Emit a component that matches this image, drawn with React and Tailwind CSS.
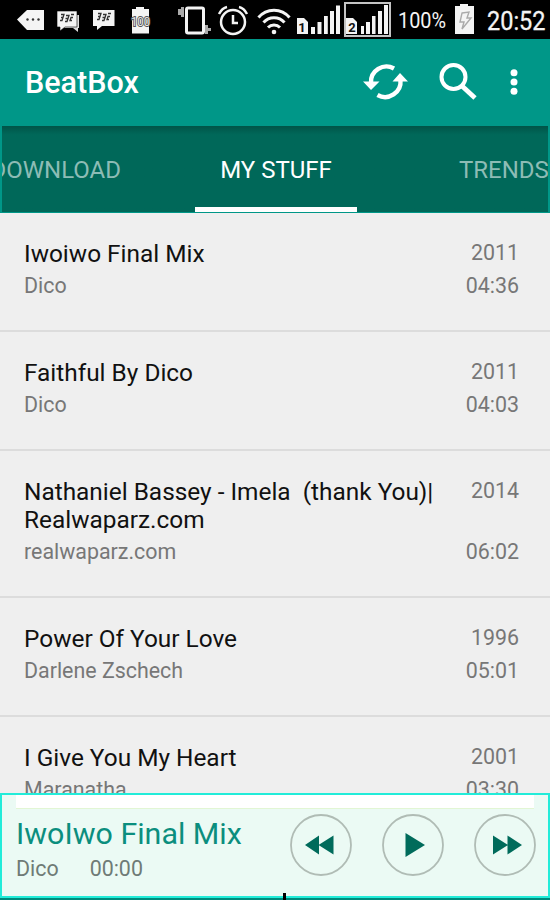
const tracks = [
  { title: "Iwoiwo Final Mix", artist: "Dico", year: "2011", time: "04:36" },
  { title: "Faithful By Dico", artist: "Dico", year: "2011", time: "04:03" },
  { title: "Nathaniel Bassey - Imela  (thank You)|\nRealwaparz.com", artist: "realwaparz.com", year: "2014", time: "06:02" },
  { title: "Power Of Your Love", artist: "Darlene Zschech", year: "1996", time: "05:01" },
  { title: "I Give You My Heart", artist: "Maranatha", year: "2001", time: "03:30" },
];

function StatusBar() {
  return (
    <header className="h-[39px] shrink-0 bg-black">
      <svg width="550" height="39" viewBox="0 0 550 39" fill="#f4f4f4">
        <path d="M17 19.500 27 10h17v20H27z" />
        <g fill="#333">
          <circle cx="27.500" cy="19.500" r="1.200" />
          <circle cx="33" cy="19.500" r="1.200" />
          <circle cx="38.500" cy="19.500" r="1.200" />
        </g>
        <path d="M62 15h17v13h-1v4l-5-4H62z" fill="#ddd" />
        <path d="M57 11h20v16H65l-5 4v-4h-3z" stroke="#000" strokeWidth=".6" />
        <path d="M93 10h21.500v16H102l-5 4v-4h-4z" />
        <g fill="none" stroke="#333" strokeWidth="1.300">
          <path d="M61 14.500h3l-1 3h-2M66 15.500h3l-1 3h-2.500M71 14.500h3M63 17.500l-1 3h-2M68 18.500l-1 3h-2M73 17.500h-2l-1 3h2" />
          <path d="M98 13.500h3l-1 3h-2M103 14.500h3l-1 3h-2.500M108 13.500h3M100 16.500l-1 3h-2M105 17.500l-1 3h-2M110 16.500h-2l-1 3h2" />
        </g>
        <path d="M136 7h8v2h5v24.500h-17V9h4z" />
        <text x="140.500" y="26" textAnchor="middle" fontFamily="Roboto, sans-serif" fontSize="13" textLength="19" lengthAdjust="spacingAndGlyphs" fill="#e8e8e8" stroke="#555" strokeWidth="2" paintOrder="stroke">100</text>
        <rect x="186.500" y="8" width="17" height="25" rx="1.500" fill="#000" stroke="#f4f4f4" strokeWidth="3" />
        <path d="M178 9h3V7h3v10h-3v-2h-3zM205 25h3v3h3v3h-3v3h-3z" fill="#aaa" />
        <g fill="none" stroke="#f4f4f4" strokeWidth="2.500">
          <circle cx="233" cy="22" r="12" />
          <path d="M233 15v8h5M219 14q3-6 8-7M239 7q5 1 8 7" />
        </g>
        <g fill="none" stroke="#f4f4f4" strokeWidth="3">
          <path d="M258.500 17.500a20 20 0 0 1 31 0M263.500 22.500a14 14 0 0 1 21 0M268 27.500a8.500 8.500 0 0 1 12 0" />
        </g>
        <circle cx="274" cy="32" r="2.300" />
        <path d="M297 18h7l4 4v12h-11zM311 27h4v7h-4zM317.500 22h4v12h-4zM324 16h3.800v18H324zM330 11h4v23h-4zM336 5.500h4V34h-4z" />
        <rect x="345" y="3" width="45" height="33" fill="none" stroke="#c4c4c4" strokeWidth="2" />
        <path d="M346 18h7l4 4v12h-11zM361 26h3v8h-3zM366 22h4v12h-4zM372 16h3.500v18H372zM378 11h4v23h-4zM384 5h4v29h-4z" />
        <g fill="#111" fontFamily="Roboto, sans-serif" fontSize="13" fontWeight="700" textAnchor="middle">
          <text x="302" y="32">1</text>
          <text x="352" y="32">2</text>
        </g>
        <text x="398" y="28.300" fontFamily="Roboto, sans-serif" fontSize="22" textLength="48" lengthAdjust="spacingAndGlyphs">100%</text>
        <path d="M460 4h8v2h6v28h-19V6h5z" />
        <path d="m462 13 7-1-2 6h4l-9 11 2-7h-4z" fill="none" stroke="#aaa" strokeWidth="1.400" />
        <text x="487" y="29.500" fontFamily="Roboto, sans-serif" fontSize="25.500" textLength="58.500" lengthAdjust="spacingAndGlyphs" stroke="#f4f4f4" strokeWidth=".3">20:52</text>
      </svg>
    </header>
  );
}

function Toolbar() {
  return (
    <div className="flex h-[87px] shrink-0 items-center justify-between bg-[#009788] pl-[25px] text-white">
      <h1 className="text-[30.500px] leading-9 font-medium">BeatBox</h1>
      <svg width="190" height="87" viewBox="360 39 190 87" fill="none" stroke="white">
        <g strokeWidth="4.400">
          <path d="M371 83a15.500 15.500 0 0 1 23-14.500M400.500 80a15.500 15.500 0 0 1-23 15" />
          <circle cx="453.500" cy="77" r="12" strokeWidth="4" />
          <path d="m462 86 13 12" strokeWidth="4.800" />
        </g>
        <g fill="white" stroke="none">
          <path d="M363 81.500h16.500L371 90zM392.500 81.500H408L400 73z" />
          <circle cx="514" cy="72.700" r="3.500" />
          <circle cx="514" cy="82" r="3.500" />
          <circle cx="514" cy="91.200" r="3.500" />
        </g>
      </svg>
    </div>
  );
}

function Tabs() {
  return (
    <nav className="flex h-[87px] shrink-0 overflow-hidden border-x-2 border-b border-[#009788] bg-[#006859] bg-linear-to-b from-[#005448] to-[#006859] to-10% text-[24px] leading-7 whitespace-nowrap text-[#8dbcb5]">
      <div className="flex w-[193px] shrink-0 items-center justify-end pt-[2px] pr-[74px]">DOWNLOAD</div>
      <div className="flex w-[162px] shrink-0 items-center justify-center border-b-[5px] border-white pt-[7px] text-white">MY STUFF</div>
      <div className="flex shrink-0 items-center pt-[2px] pl-[102px]">TRENDS</div>
    </nav>
  );
}

function Track({ track }) {
  return (
    <li className="flex shrink-0 justify-between border-b-2 border-[#dcdcdc] pt-[27px] pr-[31px] pb-[32px] pl-6">
      <div>
        <div className="text-[24.400px] leading-7 whitespace-pre text-[#111]">{track.title}</div>
        <div className="mt-[5px] text-[21.400px] leading-[25px] text-[#777]">{track.artist}</div>
      </div>
      <div className="flex flex-col items-end justify-between text-[21.400px] leading-[25px] text-[#777]">
        <span>{track.year}</span>
        <span>{track.time}</span>
      </div>
    </li>
  );
}

function RoundButton({ label, path }) {
  return (
    <button aria-label={label} className="size-[62px] shrink-0">
      <svg width="62" height="62" viewBox="0 0 62 62">
        <circle cx="31" cy="31" r="30" fill="none" stroke="#b0bcb5" strokeWidth="1.800" />
        <path d={path} fill="#006b5b" />
      </svg>
    </button>
  );
}

function Player() {
  return (
    <footer className="relative h-[107px] shrink-0 border-b-2 border-[#00897b] bg-[#ebfaf4]">
      <div className="flex h-[105px] flex-col border-[2.500px] border-[#22ecd9] pr-[14px] pl-[14px]">
        <div className="h-[14px] shrink-0 border-b border-[#e2f6d4] bg-white" />
        <div className="flex justify-between">
          <div className="pt-[7px]">
            <div className="text-[30.400px] leading-[35px] whitespace-nowrap text-[#0b8e7e]">IwoIwo Final Mix</div>
            <div className="mt-[5px] flex gap-[31px] text-[21.400px] leading-[25px] text-[#6f7b76]">
              <span>Dico</span>
              <span>00:00</span>
            </div>
          </div>
          <div className="mt-[5px] -mr-[2px] flex gap-[30px]">
            <RoundButton label="Previous" path="M15 31 29 21.500v19zM28.500 31l15-9.500v19z" />
            <RoundButton label="Play" path="M23.500 19 43 31 23.500 43z" />
            <RoundButton label="Next" path="M19 21.500 34 31l-15 9.500zM33.500 21.500 48 31l-14.500 9.500z" />
          </div>
        </div>
      </div>
      <div className="absolute bottom-[-2px] left-[283px] h-[7px] w-[3px] bg-black" />
    </footer>
  );
}

export default function App() {
  return (
    <div className="flex h-[900px] w-[550px] flex-col overflow-hidden bg-[#efefef] font-['Roboto',sans-serif]">
      <StatusBar />
      <Toolbar />
      <Tabs />
      <ul className="flex min-h-0 flex-1 flex-col overflow-hidden">
        {tracks.map((track) => (
          <Track key={track.title} track={track} />
        ))}
      </ul>
      <Player />
    </div>
  );
}
